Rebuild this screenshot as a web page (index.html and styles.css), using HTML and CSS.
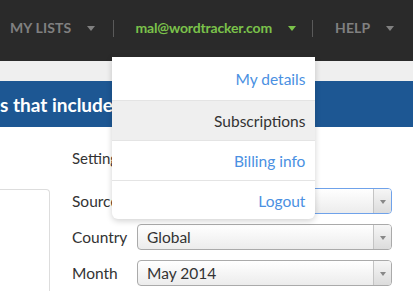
FILE: index.html
```html
<!DOCTYPE html>
<html lang="en">
<head>
    <meta charset="UTF-8">
    <title>Wordtracker</title>
    <link rel="stylesheet" href="styles.css">
</head>
<body>
    <header class="topnav">
        <div class="nav-item nav-lists">
            <span class="nav-label">MY LISTS</span>
            <span class="caret"></span>
        </div>
        <div class="nav-sep"></div>
        <div class="nav-item nav-account">
            <span class="nav-label">mal@wordtracker.com</span>
            <span class="caret"></span>
            <ul class="account-menu">
                <li class="menu-item menu-first">My details</li>
                <li class="menu-item menu-active">Subscriptions</li>
                <li class="menu-item">Billing info</li>
                <li class="menu-item menu-last">Logout</li>
            </ul>
        </div>
        <div class="nav-sep"></div>
        <div class="nav-item nav-help">
            <span class="nav-label">HELP</span>
            <span class="caret"></span>
        </div>
    </header>

    <div class="subbar"></div>

    <div class="title-band">
        <h1 class="title">s that include</h1>
    </div>

    <main class="content">
        <div class="side-panel"></div>
        <section class="settings">
            <h2 class="settings-title">Settings</h2>
            <div class="fields">
                <div class="field">
                    <label class="field-label">Source</label>
                    <div class="select select-focus">
                        <span class="select-value">Google</span>
                        <span class="select-arrow"><span class="arrow-tri"></span></span>
                    </div>
                </div>
                <div class="field">
                    <label class="field-label">Country</label>
                    <div class="select">
                        <span class="select-value">Global</span>
                        <span class="select-arrow"><span class="arrow-tri"></span></span>
                    </div>
                </div>
                <div class="field">
                    <label class="field-label">Month</label>
                    <div class="select">
                        <span class="select-value">May 2014</span>
                        <span class="select-arrow"><span class="arrow-tri"></span></span>
                    </div>
                </div>
            </div>
        </section>
    </main>
</body>
</html>
```

FILE: styles.css
```css
:root {
    --bar: #2a2a2a;
    --nav-text: #808080;
    --green: #7bc24a;
    --link: #4a90e2;
    --band: #1d5793;
    --text: #333;
}

* {
    margin: 0;
    padding: 0;
    box-sizing: border-box;
}

body {
    font-family: 'Lato', 'Noto Sans', sans-serif;
    color: var(--text);
    background: #fff;
    width: 413px;
    height: 291px;
    overflow: hidden;
}

/* top navigation */
.topnav {
    height: 61px;
    background: var(--bar);
    display: flex;
    align-items: flex-start;
    padding-top: 19px;
}

.nav-item {
    position: relative;
    display: flex;
    align-items: center;
    height: 17px;
    font-size: 14px;
    font-weight: 700;
    color: var(--nav-text);
}

.nav-lists { padding: 0 18px 0 10px; }
.nav-account { padding: 0 16px 0 21px; color: var(--green); }
.nav-help { padding: 0 0 0 22px; }

.nav-label {
    letter-spacing: 0.01em;
}

.nav-account .nav-label {
    letter-spacing: -0.15px;
}

.caret {
    width: 0;
    height: 0;
    margin-left: 16px;
    border-left: 4px solid transparent;
    border-right: 4px solid transparent;
    border-top: 5px solid currentColor;
    margin-top: 2px;
}

.nav-sep {
    width: 1px;
    height: 17px;
    margin-top: 1px;
    background: #5a5a5a;
}

/* account dropdown */
.account-menu {
    position: absolute;
    top: 38px;
    left: -2px;
    width: 203px;
    list-style: none;
    background: #fff;
    border-radius: 0 0 6px 6px;
    box-shadow: 0 2px 6px rgba(0, 0, 0, 0.18);
    overflow: hidden;
    z-index: 10;
    font-weight: 400;
}

.menu-item {
    height: 40px;
    line-height: 40px;
    padding-right: 10px;
    text-align: right;
    font-size: 15.5px;
    color: var(--link);
    border-top: 1px solid #e4e4e4;
}

.menu-first {
    height: 43px;
    line-height: 45px;
    border-top: none;
}

.menu-last {
    height: 39px;
}

.menu-active {
    background: #efefef;
    color: var(--text);
}

/* bands */
.subbar {
    height: 20px;
    background: #efefef;
}

.title-band {
    height: 46px;
    background: var(--band);
    display: flex;
    align-items: center;
}

.title {
    color: #fff;
    font-size: 19px;
    font-weight: 700;
    white-space: nowrap;
}

/* settings */
.content {
    display: flex;
    height: 164px;
}

.side-panel {
    width: 50px;
    margin-top: 62px;
    border-top: 1px solid #ddd;
    border-right: 1px solid #ddd;
    border-radius: 0 4px 0 0;
}

.settings {
    margin-left: 22px;
    padding-top: 21px;
}

.settings-title {
    font-size: 15px;
    font-weight: 400;
    line-height: 20px;
    margin-bottom: 20px;
}

.fields {
    display: flex;
    flex-direction: column;
    gap: 10px;
}

.field {
    display: flex;
    align-items: center;
}

.field-label {
    width: 65px;
    font-size: 15.5px;
}

.select {
    width: 255px;
    height: 26px;
    display: flex;
    border: 1px solid #aaa;
    border-radius: 4px;
    background: linear-gradient(#fff, #ececec);
    overflow: hidden;
}

.select-focus {
    border-color: #6fa2ea;
}

.select-value {
    flex: 1;
    padding-left: 9px;
    font-size: 15.5px;
    line-height: 24px;
}

.select-arrow {
    width: 18px;
    border-left: 1px solid #c4c4c4;
    background: linear-gradient(#f6f6f6, #dcdcdc);
    display: flex;
    align-items: center;
    justify-content: center;
}

.arrow-tri {
    width: 0;
    height: 0;
    border-left: 3px solid transparent;
    border-right: 3px solid transparent;
    border-top: 4px solid #888;
    margin-top: 2px;
}
```
